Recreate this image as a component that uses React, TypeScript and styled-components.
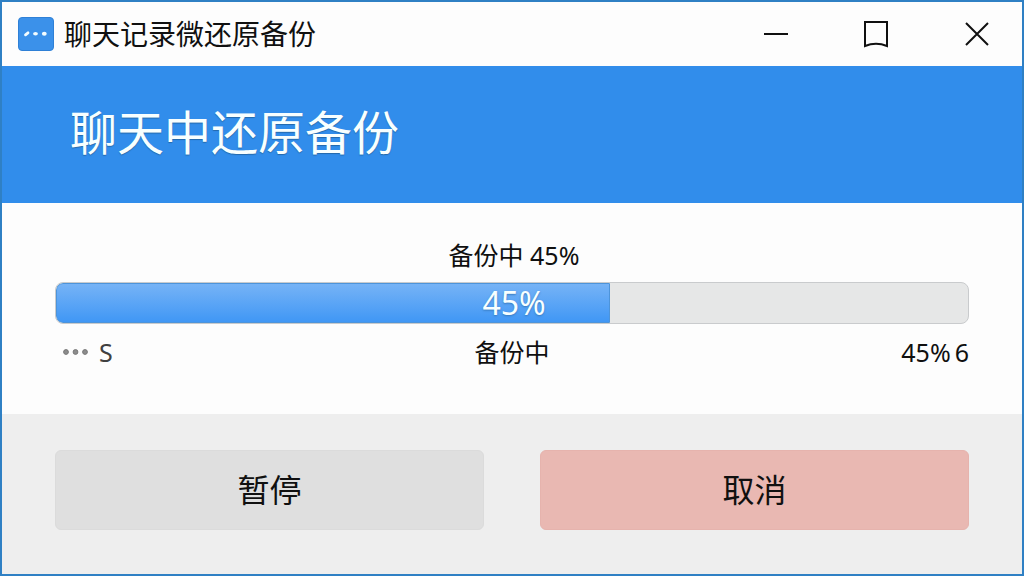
import React from "react";
import styled, { createGlobalStyle } from "styled-components";

const GlobalStyle = createGlobalStyle`
  *, *::before, *::after { box-sizing: border-box; }
  body {
    margin: 0;
    font-family: "Noto Sans", "Noto Sans CJK SC", sans-serif;
    color: #101010;
    background: #fdfdfd;
  }
`;

const Window = styled.main`
  min-height: 100vh;
  display: flex;
  flex-direction: column;
  border: 2px solid #2f80c4;
  background: #fdfdfd;
`;

const TitleBar = styled.header`
  display: flex;
  align-items: center;
  height: 64px;
  padding-left: 16px;
`;

const AppIcon = styled.svg`
  width: 36px;
  height: 34px;
  margin-right: 10px;
  flex: none;
`;

const WindowTitle = styled.span`
  flex: 1;
  font-size: 28px;
  line-height: 40px;
  white-space: nowrap;
`;

const WindowControls = styled.div`
  display: flex;
  height: 100%;
`;

const ControlButton = styled.button`
  width: 100px;
  height: 100%;
  padding: 0;
  border: 0;
  display: grid;
  place-items: center;
  background: transparent;
  color: #101010;

  &:last-child { width: 96px; padding-left: 6px; }
`;

const Banner = styled.section`
  display: flex;
  align-items: center;
  height: 137px;
  padding: 0 68px 6px;
  background: #318deb;
`;

const BannerTitle = styled.h1`
  margin: 0;
  font-size: 47px;
  line-height: 64px;
  font-weight: 400;
  color: #f8ffff;
  text-shadow: 0 1px 1px #2468aa;
`;

const Content = styled.section`
  height: 211px;
  padding: 34px 53px 0;
`;

const Status = styled.p`
  margin: 0;
  padding-left: 4px;
  font-size: 25px;
  line-height: 36px;
  text-align: center;
`;

const Track = styled.div`
  display: grid;
  height: 42px;
  margin: 9px 0 10px;
  border: 1px solid #c9cbcd;
  border-radius: 8px;
  background: #e6e7e7;
  overflow: hidden;
`;

const Fill = styled.div`
  grid-area: 1 / 1;
  border: 1px solid #4d94da;
  border-radius: 7px 0 0 7px;
  background: linear-gradient(#76b3f6, #4097f5);
`;

const TrackLabel = styled.span`
  grid-area: 1 / 1;
  place-self: center;
  padding-left: 4px;
  font-size: 32px;
  line-height: 40px;
  color: #f8ffff;
  text-shadow: 0 1px 2px #3779bd;
`;

const Details = styled.div`
  display: grid;
  grid-template-columns: 1fr auto 1fr;
  align-items: center;
  font-size: 25px;
  line-height: 36px;
`;

const Speed = styled.span`
  display: flex;
  align-items: center;
  gap: 10px;
  padding-left: 7px;
  color: #404040;
`;

const Amount = styled.span`
  display: flex;
  justify-content: flex-end;
  gap: 4px;
`;

const Actions = styled.footer`
  flex: 1;
  display: flex;
  align-items: flex-start;
  gap: 56px;
  padding: 36px 53px;
  background: #eeeeee;
`;

const ActionButton = styled.button<{ $danger?: boolean }>`
  flex: 1;
  height: 80px;
  padding: 0 0 1px;
  border: 1px solid ${({ $danger }) => ($danger ? "#e6b3ad" : "#dbdbdb")};
  border-radius: 6px;
  background: ${({ $danger }) => ($danger ? "#e9b8b2" : "#dfdfdf")};
  color: #101010;
  font-family: inherit;
  font-size: 32px;
  line-height: 48px;
`;

const PROGRESS = 45;
const FILL_WIDTH = 60.7;

export default function App() {
  return (
    <>
      <GlobalStyle />
      <Window>
        <TitleBar>
          <AppIcon viewBox="0 0 36 34" aria-hidden="true">
            <rect x="0.5" y="0.5" width="35" height="33" rx="3.5" fill="#3b91ea" stroke="#2f80d6" />
            <path d="M7.5 17.8 10 15.8" stroke="#f4fdff" strokeWidth="2.8" strokeLinecap="round" />
            <ellipse cx="17.5" cy="16.7" rx="2.4" ry="1.8" fill="#f4fdff" />
            <ellipse cx="26.3" cy="16.7" rx="2.4" ry="2" fill="#f4fdff" />
          </AppIcon>
          <WindowTitle>聊天记录微还原备份</WindowTitle>
          <WindowControls>
            <ControlButton type="button" aria-label="最小化">
              <svg width="26" height="26" viewBox="0 0 26 26" fill="none" stroke="currentColor" strokeWidth="2">
                <path d="M1 13h24" />
              </svg>
            </ControlButton>
            <ControlButton type="button" aria-label="最大化">
              <svg width="26" height="28" viewBox="0 0 26 28" fill="none" stroke="currentColor" strokeWidth="2">
                <path d="M2 26V2H24V26Q13 21.5 2 26Z" />
              </svg>
            </ControlButton>
            <ControlButton type="button" aria-label="关闭">
              <svg width="26" height="26" viewBox="0 0 26 26" fill="none" stroke="currentColor" strokeWidth="2">
                <path d="M2 2 24 24M24 2 2 24" />
              </svg>
            </ControlButton>
          </WindowControls>
        </TitleBar>
        <Banner>
          <BannerTitle>聊天中还原备份</BannerTitle>
        </Banner>
        <Content>
          <Status>备份中 {PROGRESS}%</Status>
          <Track role="progressbar" aria-label="备份中" aria-valuenow={PROGRESS} aria-valuemin={0} aria-valuemax={100}>
            <Fill style={{ width: `${FILL_WIDTH}%` }} />
            <TrackLabel>{PROGRESS}%</TrackLabel>
          </Track>
          <Details>
            <Speed>
              <svg width="27" height="8" viewBox="0 0 27 8" fill="#8c8c8c" stroke="#777777" aria-hidden="true">
                <circle cx="4" cy="4" r="2.4" />
                <circle cx="13.5" cy="4" r="2.4" />
                <circle cx="23" cy="4" r="2.4" />
              </svg>
              <span>S</span>
            </Speed>
            <span>备份中</span>
            <Amount>
              <span>{PROGRESS}%</span>
              <span>6</span>
            </Amount>
          </Details>
        </Content>
        <Actions>
          <ActionButton type="button">暂停</ActionButton>
          <ActionButton type="button" $danger>取消</ActionButton>
        </Actions>
      </Window>
    </>
  );
}
